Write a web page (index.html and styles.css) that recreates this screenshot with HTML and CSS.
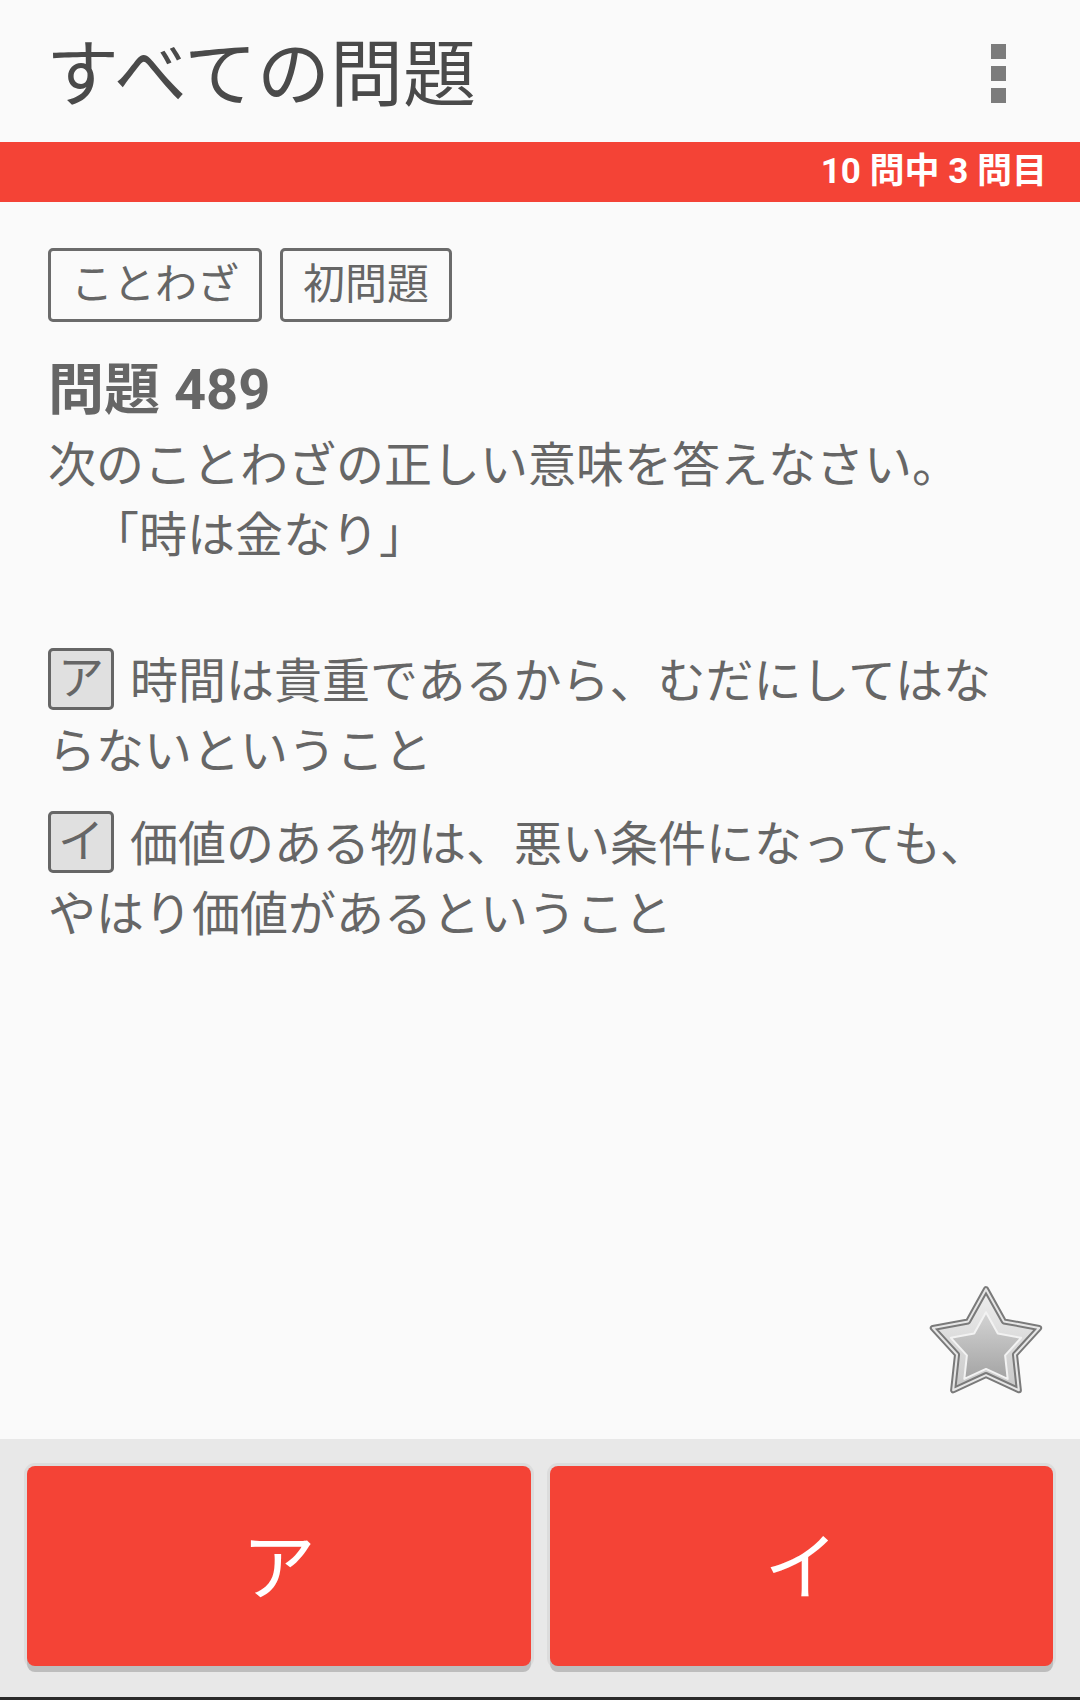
FILE: index.html
```html
<!DOCTYPE html>
<html lang="ja">
    <head>
        <meta charset="utf-8">
        <title>すべての問題</title>
        <link rel="stylesheet" href="styles.css">
    </head>
    <body>
        <div class="screen">
            <header class="toolbar">
                <h1 class="toolbar-title">すべての問題</h1>
                <div class="menu">
                    <span></span>
                    <span></span>
                    <span></span>
                </div>
            </header>
            <div class="progress">10 問中 3 問目</div>

            <main class="quiz">
                <div class="tags">
                    <span class="tag">ことわざ</span>
                    <span class="tag">初問題</span>
                </div>
                <h2 class="quiz-no">問題 489</h2>
                <p class="question">次のことわざの正しい意味を答えなさい。<br><span class="indent">「時は金なり」</span></p>

                <p class="choice"><span class="mark">ア</span> 時間は貴重であるから、むだにしてはならないということ</p>
                <p class="choice"><span class="mark">イ</span> 価値のある物は、悪い条件になっても、やはり価値があるということ</p>

                <div class="star">
                    <svg width="122" height="118" viewBox="0 0 120 116">
                        <defs>
                            <linearGradient id="outer" x1="0" y1="0" x2="0" y2="1">
                                <stop offset="0" stop-color="#efefef"/>
                                <stop offset="1" stop-color="#c8c8c8"/>
                            </linearGradient>
                            <linearGradient id="inner" x1="0" y1="0" x2="0" y2="1">
                                <stop offset="0" stop-color="#d4d4d4"/>
                                <stop offset="1" stop-color="#a4a4a4"/>
                            </linearGradient>
                        </defs>
                        <polygon points="60,7 77.6,38.7 112.3,45.2 88.5,71.3 92.3,106.4 60,91.5 27.7,106.4 31.5,71.3 7.7,45.2 42.4,38.7"
                                 fill="url(#outer)" stroke="#7a7a7a" stroke-width="6" stroke-linejoin="round"/>
                        <polygon points="60,7 77.6,38.7 112.3,45.2 88.5,71.3 92.3,106.4 60,91.5 27.7,106.4 31.5,71.3 7.7,45.2 42.4,38.7"
                                 fill="none" stroke="#e6e6e6" stroke-width="2" stroke-linejoin="round"/>
                        <polygon points="60,7 77.6,38.7 112.3,45.2 88.5,71.3 92.3,106.4 60,91.5 27.7,106.4 31.5,71.3 7.7,45.2 42.4,38.7"
                                 transform="translate(60 66) scale(0.66) translate(-60 -62)"
                                 fill="url(#inner)" stroke="#f2f2f2" stroke-width="3" stroke-linejoin="round"/>
                    </svg>
                </div>
            </main>

            <footer class="answers">
                <button class="answer">ア</button>
                <button class="answer">イ</button>
            </footer>
        </div>
    </body>
</html>
```

FILE: styles.css
```css
html, body {
    margin: 0;
    padding: 0;
}
body {
    background: #fafafa;
    font-family: "Roboto", "Noto Sans CJK JP", sans-serif;
    color: #666666;
}
.screen {
    display: flex;
    flex-direction: column;
    height: 1700px;
}
.toolbar {
    display: flex;
    align-items: center;
    justify-content: space-between;
    height: 142px;
    padding: 0 74px 0 46px;
    flex-shrink: 0;
}
.toolbar-title {
    margin: 0;
    font-size: 73px;
    font-weight: normal;
    color: #4a4a4a;
    line-height: 1;
    padding-top: 8px;
}
.menu {
    display: flex;
    flex-direction: column;
    gap: 7px;
    padding-top: 4px;
}
.menu span {
    display: block;
    width: 15px;
    height: 15px;
    background: #7c7c7c;
}
.progress {
    height: 60px;
    line-height: 60px;
    background: #f44336;
    color: #ffffff;
    font-weight: bold;
    font-size: 35px;
    text-align: right;
    padding-right: 33px;
    flex-shrink: 0;
}
.quiz {
    flex: 1;
    display: flex;
    flex-direction: column;
    padding: 46px 50px 0 48px;
}
.tags {
    display: flex;
    gap: 18px;
}
.tag {
    display: inline-block;
    border: 3px solid #6b6b6b;
    border-radius: 5px;
    font-size: 42px;
    line-height: 68px;
    padding: 0 20px;
    color: #666666;
}
.quiz-no {
    margin: 33px 0 6px 0;
    font-size: 56px;
    font-weight: bold;
    line-height: 70px;
    color: #666666;
}
.question,
.choice {
    margin: 0;
    font-size: 48px;
    line-height: 70px;
}
.question {
    margin-bottom: 76px;
}
.indent {
    padding-left: 43px;
}
.choice {
    margin-bottom: 23px;
}
.mark {
    display: inline-block;
    box-sizing: border-box;
    width: 66px;
    height: 62px;
    line-height: 54px;
    text-align: center;
    font-size: 46px;
    background: #e0e0e0;
    border: 3px solid #666666;
    border-radius: 5px;
    vertical-align: 4px;
    margin-right: 4px;
}
.star {
    margin-top: auto;
    align-self: flex-end;
    margin-right: -17px;
    margin-bottom: 39px;
    line-height: 0;
}
.answers {
    display: flex;
    gap: 19px;
    height: 261px;
    box-sizing: border-box;
    padding: 27px 27px 0 27px;
    background: #e8e8e8;
    border-bottom: 3px solid #2a2a2a;
    flex-shrink: 0;
}
.answer {
    flex: 1;
    height: 200px;
    border: none;
    border-radius: 8px;
    background: #f44336;
    color: #ffffff;
    font-family: "Noto Sans CJK JP", sans-serif;
    font-size: 74px;
    padding-bottom: 10px;
    box-shadow: 0 6px 0 #bdbdbd, 0 0 0 3px #dcdcdc;
}
```
